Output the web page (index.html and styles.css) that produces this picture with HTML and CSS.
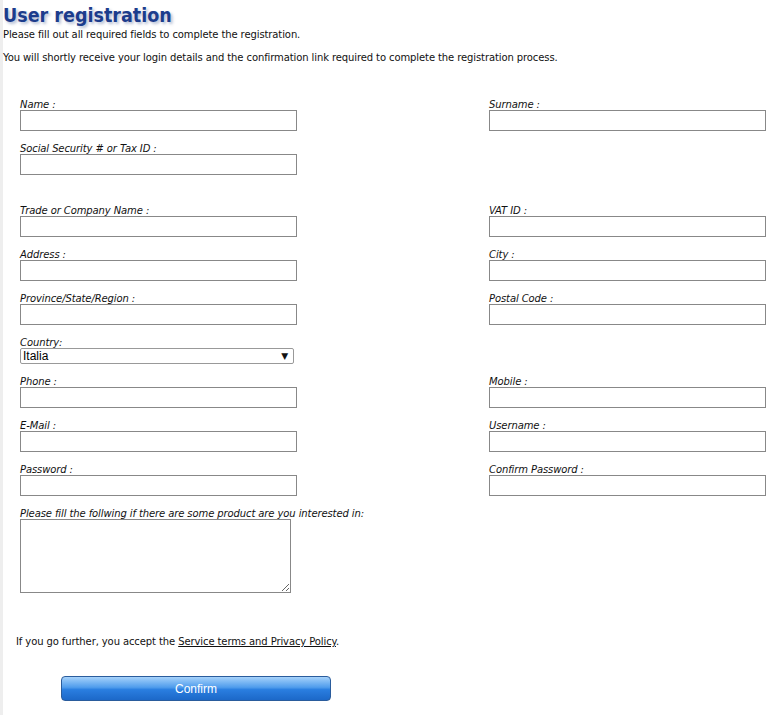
FILE: index.html
```html
<!DOCTYPE html>
<html lang="en">

<head>
    <meta charset="UTF-8">
    <meta name="viewport" content="width=device-width, initial-scale=1.0">
    <title>User registration</title>
    <link rel="stylesheet" href="styles.css">
</head>

<body>
    <div class="page">
        <h1>User registration</h1>
        <p class="intro">Please fill out all required fields to complete the registration.</p>
        <p class="intro second">You will shortly receive your login details and the confirmation link required to complete the registration process.</p>

        <form class="reg-form">
            <div class="row">
                <div class="field"><label>Name :</label><input type="text"></div>
                <div class="field"><label>Surname :</label><input type="text"></div>
            </div>
            <div class="row">
                <div class="field"><label>Social Security # or Tax ID :</label><input type="text"></div>
            </div>
            <div class="spacer"></div>
            <div class="row">
                <div class="field"><label>Trade or Company Name :</label><input type="text"></div>
                <div class="field"><label>VAT ID :</label><input type="text"></div>
            </div>
            <div class="row">
                <div class="field"><label>Address :</label><input type="text"></div>
                <div class="field"><label>City :</label><input type="text"></div>
            </div>
            <div class="row">
                <div class="field"><label>Province/State/Region :</label><input type="text"></div>
                <div class="field"><label>Postal Code :</label><input type="text"></div>
            </div>
            <div class="row">
                <div class="field">
                    <label>Country:</label>
                    <div class="select-wrap">
                        <select>
                            <option>Italia</option>
                        </select>
                    </div>
                </div>
            </div>
            <div class="row">
                <div class="field"><label>Phone :</label><input type="text"></div>
                <div class="field"><label>Mobile :</label><input type="text"></div>
            </div>
            <div class="row">
                <div class="field"><label>E-Mail :</label><input type="text"></div>
                <div class="field"><label>Username :</label><input type="text"></div>
            </div>
            <div class="row">
                <div class="field"><label>Password :</label><input type="password"></div>
                <div class="field"><label>Confirm Password :</label><input type="password"></div>
            </div>
            <div class="field wide">
                <label>Please fill the follwing if there are some product are you interested in:</label>
                <textarea></textarea>
            </div>

            <p class="terms">If you go further, you accept the <a href="#">Service terms and Privacy Policy</a>.</p>

            <button type="button" class="confirm">Confirm</button>
        </form>
    </div>
</body>

</html>
```

FILE: styles.css
```css
body {
    margin: 0;
    font-family: "DejaVu Sans", sans-serif;
    font-size: 10px;
    letter-spacing: -0.1px;
    color: #111;
    background-color: #fff;
}

.page {
    border-left: 3px solid #eeeeee;
    min-height: 715px;
    box-sizing: border-box;
}

h1 {
    margin: 0;
    padding: 3px 0 0 0;
    font-family: "DejaVu Sans Condensed", "DejaVu Sans", sans-serif;
    font-size: 19.5px;
    line-height: 26px;
    font-weight: bold;
    letter-spacing: 0;
    color: #1c3c8c;
    text-shadow: 2px 2px 3px rgba(90, 110, 160, 0.45);
}

.intro {
    margin: 0;
    line-height: 12px;
}

.intro.second {
    margin-top: 11px;
}

.reg-form {
    margin-top: 34px;
    padding-left: 17px;
}

.row {
    display: grid;
    grid-template-columns: 469px 1fr;
}

.field {
    margin-bottom: 11px;
}

.field label {
    display: block;
    padding-top: 1px;
    font-style: italic;
    line-height: 11px;
}

.field input {
    display: block;
    width: 277px;
    height: 21px;
    margin: 0;
    padding: 0 3px;
    border: 1px solid #888;
    box-sizing: border-box;
    font-size: 12px;
}

.spacer {
    height: 18px;
}

.select-wrap {
    position: relative;
    width: 274px;
}

.select-wrap select {
    display: block;
    width: 100%;
    height: 16px;
    margin: 0;
    padding: 0 2px;
    border: 1px solid #999;
    border-radius: 2px;
    box-sizing: border-box;
    background-color: #fff;
    font-family: "Liberation Sans", Arial, sans-serif;
    font-size: 12px;
    line-height: 14px;
    color: #000;
    -webkit-appearance: none;
    appearance: none;
}

.select-wrap::after {
    content: "\25BC";
    position: absolute;
    right: 6px;
    top: 2px;
    font-size: 9px;
    line-height: 12px;
    color: #111;
    pointer-events: none;
}

.field.wide textarea {
    display: block;
    width: 271px;
    height: 74px;
    margin: 0;
    border: 1px solid #888;
    box-sizing: border-box;
}

.terms {
    margin: 43px 0 0 -4px;
    line-height: 12px;
}

.terms a {
    color: #111;
    text-decoration: underline;
}

.confirm {
    display: block;
    margin: 28px 0 0 41px;
    width: 270px;
    height: 25px;
    border: 1px solid #2a5c9c;
    border-radius: 4px;
    background: linear-gradient(to bottom, #a6d2fb 0%, #4f9cec 45%, #2a7ee0 55%, #1c68c8 100%);
    color: #fff;
    font-family: "Liberation Sans", Arial, sans-serif;
    font-size: 12px;
    letter-spacing: 0;
    cursor: pointer;
}
```
